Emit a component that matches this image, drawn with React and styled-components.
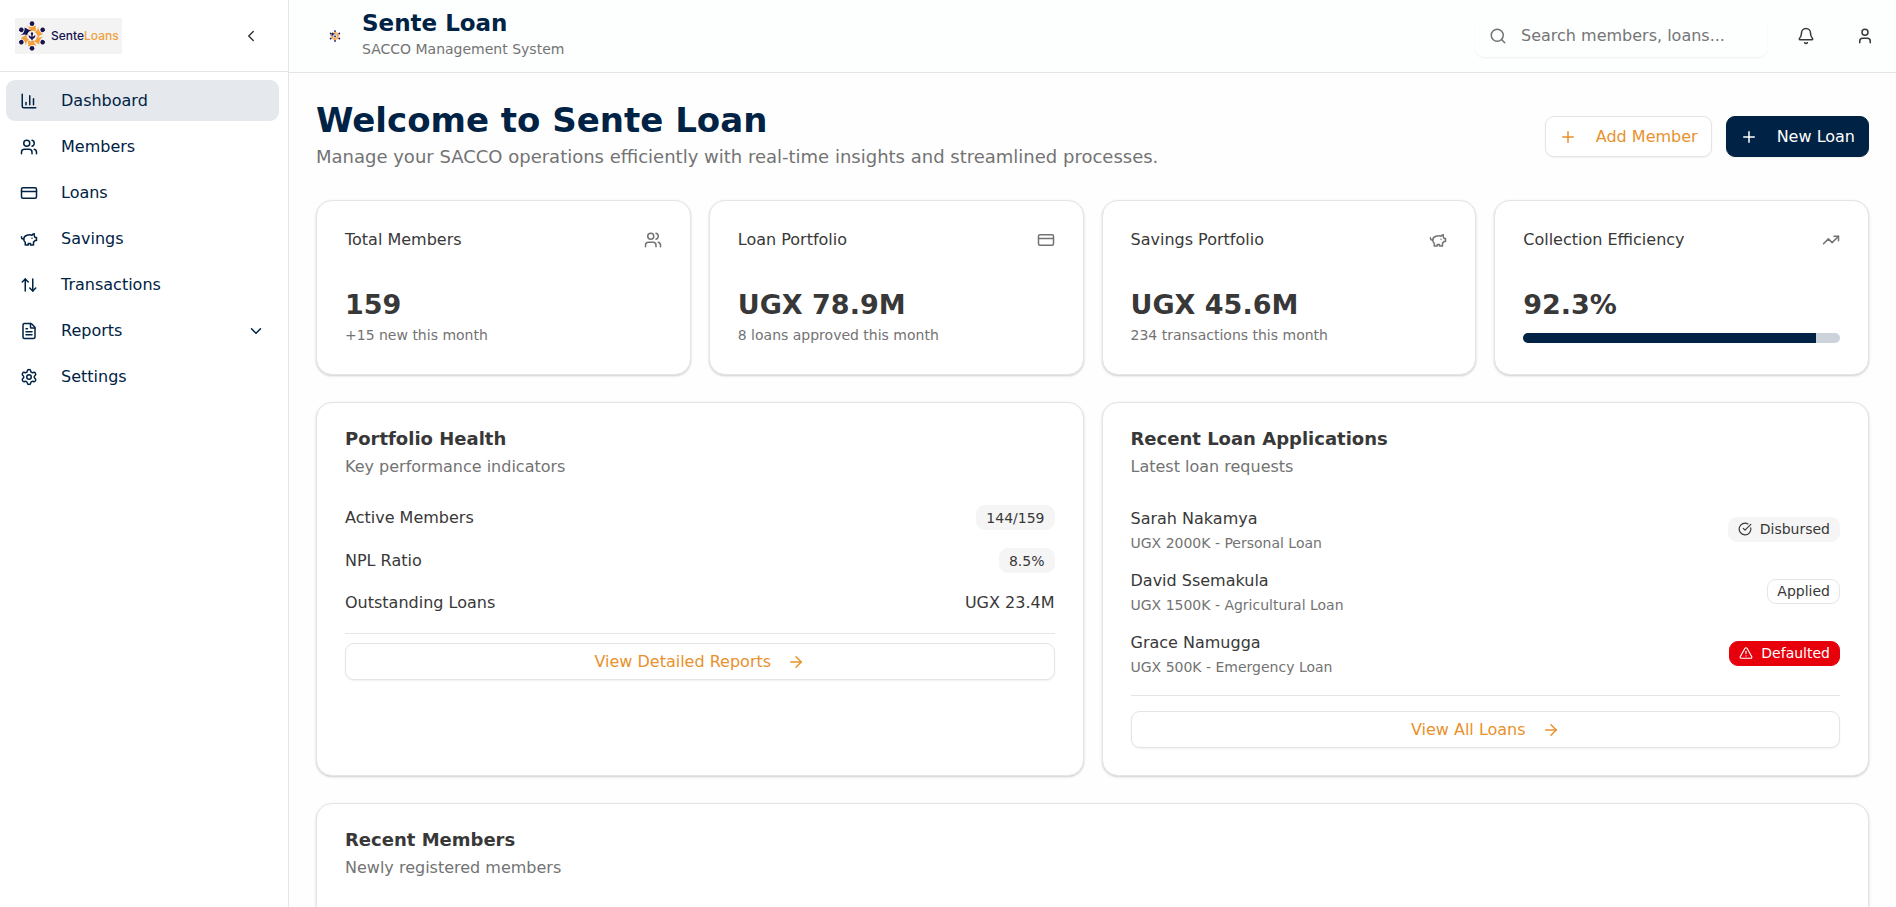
import React from "react";
import styled, { createGlobalStyle, css } from "styled-components";
import {
  ArrowRight,
  ArrowUpDown,
  Bell,
  ChartColumn,
  ChevronDown,
  ChevronLeft,
  CircleCheckBig,
  CreditCard,
  FileText,
  Plus,
  Search,
  Settings,
  TrendingUp,
  TriangleAlert,
  User,
  Users,
} from "lucide-react";

const navy = "#002244";
const orange = "#e8912d";
const ink = "#383838";
const muted = "#737373";
const line = "#e5e5e5";

const GlobalStyle = createGlobalStyle`
  *, *::before, *::after { box-sizing: border-box; }
  body {
    margin: 0;
    background: #fefefe;
    color: ${ink};
    font-family: "DejaVu Sans", sans-serif;
    font-size: 16px;
    line-height: 24px;
  }
  h1, h2, h3, p, ul, dl, dd { margin: 0; padding: 0; }
  ul { list-style: none; }
  button, input { font: inherit; color: inherit; }
  button { cursor: pointer; }
  svg { flex-shrink: 0; }
`;

const Shell = styled.div`
  display: flex;
  height: 100vh;
  overflow: hidden;
`;

const Sidebar = styled.aside`
  flex: none;
  width: 289px;
  background: #fff;
  border-right: 1px solid ${line};
`;

const SidebarTop = styled.div`
  display: flex;
  align-items: center;
  justify-content: space-between;
  height: 72px;
  padding: 0 19px 0 15px;
  border-bottom: 1px solid ${line};
`;

const Brand = styled.a`
  display: flex;
  align-items: center;
  gap: 4px;
  width: 107px;
  height: 36px;
  padding-left: 2px;
  background: #f3f3f3;
  color: #17134f;
  font: 500 12px/16px Inter, sans-serif;
  text-decoration: none;
`;

const BrandAccent = styled.span`
  color: #f0a040;
`;

const IconButton = styled.button`
  display: grid;
  place-items: center;
  width: ${({ $size = 40 }) => $size}px;
  height: ${({ $size = 40 }) => $size}px;
  padding: 0;
  border: 0;
  border-radius: 9px;
  background: transparent;
`;

const NavList = styled.ul`
  display: flex;
  flex-direction: column;
  gap: 5px;
  padding: 8px 9px 8px 6px;
`;

const NavLink = styled.a`
  display: flex;
  align-items: center;
  gap: 23px;
  height: 41px;
  padding: 0 14px;
  border-radius: 9px;
  background: ${({ $active }) => ($active ? "#e5e8ec" : "transparent")};
  color: ${navy};
  text-decoration: none;
`;

const NavLabel = styled.span`
  flex: 1;
`;

const Main = styled.div`
  flex: 1;
  min-width: 0;
  display: flex;
  flex-direction: column;
`;

const TopBar = styled.header`
  flex: none;
  display: flex;
  align-items: center;
  gap: 19px;
  height: 73px;
  padding: 0 11px 0 28px;
  background: #fdfefe;
  border-bottom: 1px solid ${line};
`;

const Identity = styled.div`
  display: flex;
  align-items: center;
  gap: 9px;
  margin-right: auto;
`;

const MarkFrame = styled.div`
  display: grid;
  place-items: center;
  width: 36px;
  height: 36px;
`;

const AppName = styled.p`
  color: ${navy};
  font-size: 23px;
  font-weight: 700;
  line-height: 27px;
`;

const AppTag = styled.p`
  color: ${muted};
  font-size: 14px;
  line-height: 25px;
`;

const SearchBox = styled.label`
  display: flex;
  align-items: center;
  gap: 14px;
  width: 292px;
  height: 41px;
  padding: 0 14px;
  border-radius: 9px;
  box-shadow: 0 1px 2px rgba(0, 0, 0, 0.06);
  color: ${muted};
`;

const SearchInput = styled.input`
  flex: 1;
  min-width: 0;
  padding: 0;
  border: 0;
  outline: 0;
  background: transparent;
  &::placeholder { color: #757575; opacity: 1; }
`;

const Content = styled.main`
  flex: 1;
  min-height: 0;
  overflow-y: auto;
  scrollbar-width: none;
  display: flex;
  flex-direction: column;
  gap: 27px;
  padding: 27px;
`;

const PageHead = styled.div`
  display: flex;
  align-items: center;
  justify-content: space-between;
`;

const PageTitle = styled.h1`
  color: ${navy};
  font-size: 34px;
  line-height: 40px;
`;

const PageIntro = styled.p`
  color: ${muted};
  font-size: 18px;
  line-height: 33px;
`;

const Actions = styled.div`
  display: flex;
  gap: 14px;
`;

const Button = styled.button`
  display: flex;
  align-items: center;
  justify-content: center;
  gap: 19px;
  height: 41px;
  padding: 0 13px;
  border: 1px solid ${line};
  border-radius: 9px;
  background: #fff;
  box-shadow: 0 1px 2px rgba(0, 0, 0, 0.06);
  color: ${orange};
  ${({ $primary }) =>
    $primary &&
    css`
      border-color: ${navy};
      background: ${navy};
      color: #fff;
    `}
  ${({ $wide }) =>
    $wide &&
    css`
      gap: 16px;
      width: 100%;
      height: 37px;
    `}
`;

const CardGrid = styled.div`
  display: grid;
  grid-template-columns: repeat(${({ $columns }) => $columns}, minmax(0, 1fr));
  gap: 18px;
`;

const Card = styled.section`
  padding: 27px 28px;
  border: 1px solid ${line};
  border-radius: 16px;
  background: #fff;
  box-shadow: 0 1px 3px rgba(0, 0, 0, 0.1), 0 1px 2px rgba(0, 0, 0, 0.1);
`;

const StatHead = styled.div`
  display: flex;
  align-items: center;
  justify-content: space-between;
  margin-bottom: 35px;
  svg { color: ${muted}; }
`;

const StatTitle = styled.h3`
  font-size: 16px;
  font-weight: 400;
`;

const StatValue = styled.p`
  font-size: 27px;
  font-weight: 700;
  line-height: 36px;
`;

const StatNote = styled.p`
  color: ${muted};
  font-size: 14px;
  line-height: 24px;
`;

const Track = styled.div`
  height: 10px;
  margin-top: 10px;
  overflow: hidden;
  border-radius: 5px;
  background: #ccd3da;
`;

const Fill = styled.div`
  height: 100%;
  background: ${navy};
`;

const CardTitle = styled.h2`
  margin-bottom: 7px;
  font-size: 18px;
  line-height: 18px;
`;

const CardText = styled.p`
  margin-bottom: 26px;
  color: ${muted};
`;

const Rows = styled.ul`
  display: flex;
  flex-direction: column;
  gap: ${({ $gap }) => $gap}px;
  padding-bottom: 18px;
  margin-bottom: ${({ $after }) => $after}px;
  border-bottom: 1px solid ${line};
`;

const Row = styled.li`
  display: flex;
  align-items: center;
  justify-content: space-between;
`;

const RowName = styled.p`
  line-height: 28px;
`;

const RowNote = styled.p`
  color: ${muted};
  font-size: 14px;
  line-height: 20px;
`;

const badgeTones = {
  secondary: css`
    border-color: #f5f5f5;
    background: #f5f5f5;
  `,
  outline: css`
    border-color: ${line};
  `,
  danger: css`
    border-color: #e7000b;
    background: #e7000b;
    color: #fff;
  `,
};

const Badge = styled.span`
  display: inline-flex;
  align-items: center;
  gap: 8px;
  height: 25px;
  padding: 0 9px;
  border: 1px solid transparent;
  border-radius: 9px;
  font-size: 14px;
  ${({ $tone }) => badgeTones[$tone]}
`;

const spokes = [0, 60, 120, 180, 240, 300];

function Emblem({ size }) {
  return (
    <svg width={size} height={size} viewBox="-45 -45 90 90" aria-hidden="true">
      {spokes.map((angle) => (
        <g key={angle} transform={`rotate(${angle})`}>
          <circle cx="0" cy="-37" r="7" fill="#17134f" />
          <path
            d="M-18 -33C-11 -26 2 -25 11 -32C13 -25 9 -19 14 -11C7 -16 0 -17 -5 -13C-5 -20 -10 -26 -18 -33Z"
            fill={angle === 300 ? "#17134f" : "#f3a03c"}
          />
        </g>
      ))}
      <path
        d="M0 -13L4 -7L2 -4V3L10 -3C11 4 6 8 2 9V13H-2V9C-6 8 -11 4 -10 -3L-2 3V-4L-4 -7Z"
        fill="#17134f"
      />
    </svg>
  );
}

function PiggyBank({ size }) {
  return (
    <svg
      width={size}
      height={size}
      viewBox="0 0 24 24"
      fill="none"
      stroke="currentColor"
      strokeWidth="2"
      strokeLinecap="round"
      strokeLinejoin="round"
      aria-hidden="true"
    >
      <path d="M19 5c-1.5 0-2.8 1.4-3 2-3.5-1.5-11-.3-11 5 0 1.8 0 3 2 4.5V20h4v-2h3v2h4v-4c1-.5 1.7-1 2-2h2v-4h-2c0-1-.5-1.5-1-2V5z" />
      <path d="M2 9v1c0 1.1.9 2 2 2h1" />
      <path d="M16 11h.01" />
    </svg>
  );
}

const navItems = [
  { label: "Dashboard", Icon: ChartColumn, active: true },
  { label: "Members", Icon: Users },
  { label: "Loans", Icon: CreditCard },
  { label: "Savings", Icon: PiggyBank },
  { label: "Transactions", Icon: ArrowUpDown },
  { label: "Reports", Icon: FileText, expandable: true },
  { label: "Settings", Icon: Settings },
];

const stats = [
  { title: "Total Members", Icon: Users, value: "159", note: "+15 new this month" },
  { title: "Loan Portfolio", Icon: CreditCard, value: "UGX 78.9M", note: "8 loans approved this month" },
  { title: "Savings Portfolio", Icon: PiggyBank, value: "UGX 45.6M", note: "234 transactions this month" },
  { title: "Collection Efficiency", Icon: TrendingUp, value: "92.3%", progress: 92.3 },
];

const loans = [
  { name: "Sarah Nakamya", detail: "UGX 2000K - Personal Loan", status: "Disbursed", tone: "secondary", Icon: CircleCheckBig },
  { name: "David Ssemakula", detail: "UGX 1500K - Agricultural Loan", status: "Applied", tone: "outline" },
  { name: "Grace Namugga", detail: "UGX 500K - Emergency Loan", status: "Defaulted", tone: "danger", Icon: TriangleAlert },
];

export default function App() {
  return (
    <>
      <GlobalStyle />
      <Shell>
        <Sidebar>
          <SidebarTop>
            <Brand href="#home">
              <Emblem size={30} />
              <span>
                Sente<BrandAccent>Loans</BrandAccent>
              </span>
            </Brand>
            <IconButton $size={36} aria-label="Collapse sidebar">
              <ChevronLeft size={18} />
            </IconButton>
          </SidebarTop>
          <nav aria-label="Main">
            <NavList>
              {navItems.map(({ label, Icon, active, expandable }) => (
                <li key={label}>
                  <NavLink href={`#${label.toLowerCase()}`} $active={active}>
                    <Icon size={18} />
                    <NavLabel>{label}</NavLabel>
                    {expandable && <ChevronDown size={18} />}
                  </NavLink>
                </li>
              ))}
            </NavList>
          </nav>
        </Sidebar>
        <Main>
          <TopBar>
            <Identity>
              <MarkFrame>
                <Emblem size={12} />
              </MarkFrame>
              <div>
                <AppName>Sente Loan</AppName>
                <AppTag>SACCO Management System</AppTag>
              </div>
            </Identity>
            <SearchBox>
              <Search size={18} />
              <SearchInput type="search" aria-label="Search" placeholder="Search members, loans..." />
            </SearchBox>
            <IconButton aria-label="Notifications">
              <Bell size={18} />
            </IconButton>
            <IconButton aria-label="Account">
              <User size={18} />
            </IconButton>
          </TopBar>
          <Content>
            <PageHead>
              <div>
                <PageTitle>Welcome to Sente Loan</PageTitle>
                <PageIntro>
                  Manage your SACCO operations efficiently with real-time insights and streamlined processes.
                </PageIntro>
              </div>
              <Actions>
                <Button>
                  <Plus size={18} />
                  Add Member
                </Button>
                <Button $primary>
                  <Plus size={18} />
                  New Loan
                </Button>
              </Actions>
            </PageHead>
            <CardGrid $columns={4}>
              {stats.map(({ title, Icon, value, note, progress }) => (
                <Card key={title}>
                  <StatHead>
                    <StatTitle>{title}</StatTitle>
                    <Icon size={18} />
                  </StatHead>
                  <StatValue>{value}</StatValue>
                  {note && <StatNote>{note}</StatNote>}
                  {progress && (
                    <Track role="progressbar" aria-label={title} aria-valuenow={progress}>
                      <Fill style={{ width: `${progress}%` }} />
                    </Track>
                  )}
                </Card>
              ))}
            </CardGrid>
            <CardGrid $columns={2}>
              <Card>
                <CardTitle>Portfolio Health</CardTitle>
                <CardText>Key performance indicators</CardText>
                <Rows $gap={18} $after={9}>
                  <Row>
                    <span>Active Members</span>
                    <Badge $tone="secondary">144/159</Badge>
                  </Row>
                  <Row>
                    <span>NPL Ratio</span>
                    <Badge $tone="secondary">8.5%</Badge>
                  </Row>
                  <Row>
                    <span>Outstanding Loans</span>
                    <span>UGX 23.4M</span>
                  </Row>
                </Rows>
                <Button $wide>
                  View Detailed Reports
                  <ArrowRight size={18} />
                </Button>
              </Card>
              <Card>
                <CardTitle>Recent Loan Applications</CardTitle>
                <CardText>Latest loan requests</CardText>
                <Rows $gap={14} $after={15}>
                  {loans.map(({ name, detail, status, tone, Icon }) => (
                    <Row key={name}>
                      <div>
                        <RowName>{name}</RowName>
                        <RowNote>{detail}</RowNote>
                      </div>
                      <Badge $tone={tone}>
                        {Icon && <Icon size={14} />}
                        {status}
                      </Badge>
                    </Row>
                  ))}
                </Rows>
                <Button $wide>
                  View All Loans
                  <ArrowRight size={18} />
                </Button>
              </Card>
            </CardGrid>
            <Card>
              <CardTitle>Recent Members</CardTitle>
              <CardText>Newly registered members</CardText>
            </Card>
          </Content>
        </Main>
      </Shell>
    </>
  );
}
